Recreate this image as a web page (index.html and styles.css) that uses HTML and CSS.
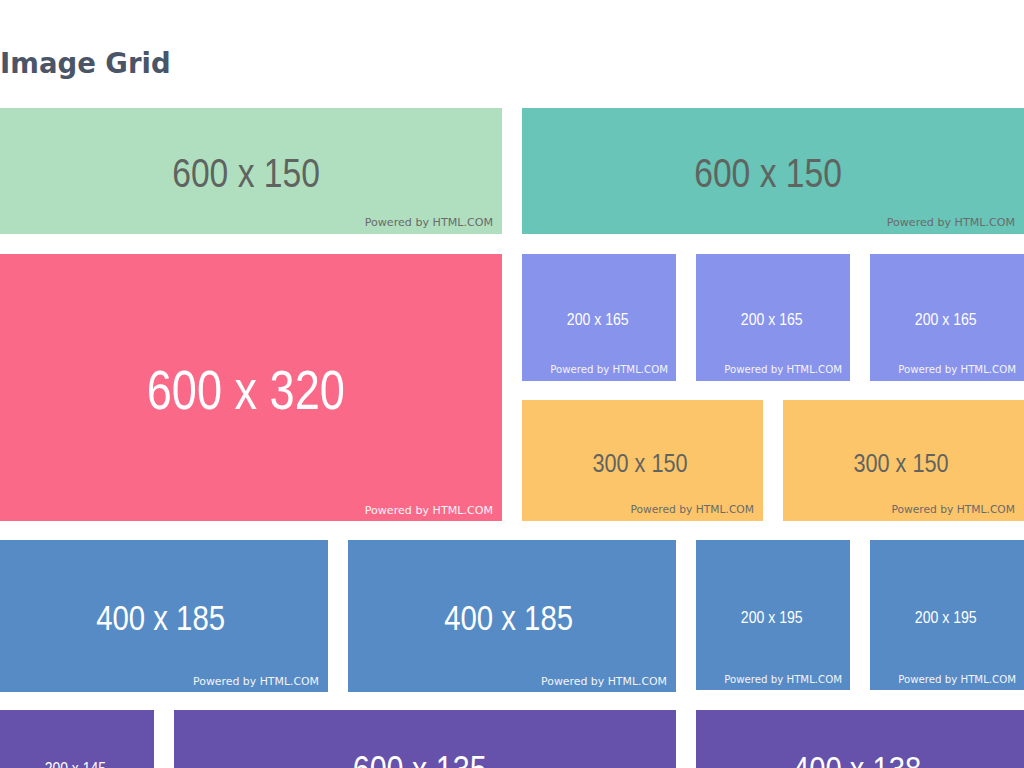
FILE: index.html
```html
<!DOCTYPE html>
<html lang="en">
<head>
<meta charset="utf-8">
<title>Image Grid</title>
<link rel="stylesheet" href="styles.css">
</head>
<body>
<main class="page">
  <h1 class="title">Image Grid</h1>
  <section class="grid">
    <div class="tile span6 green light r600x150"><span class="label">600 x 150</span><span class="powered">Powered by HTML.COM</span></div>
    <div class="tile span6 teal light r600x150"><span class="label">600 x 150</span><span class="powered">Powered by HTML.COM</span></div>
    <div class="tile span6 tall pink dark r600x320"><span class="label">600 x 320</span><span class="powered">Powered by HTML.COM</span></div>
    <div class="tile span2 peri dark r200x165"><span class="label">200 x 165</span><span class="powered">Powered by HTML.COM</span></div>
    <div class="tile span2 peri dark r200x165"><span class="label">200 x 165</span><span class="powered">Powered by HTML.COM</span></div>
    <div class="tile span2 peri dark r200x165"><span class="label">200 x 165</span><span class="powered">Powered by HTML.COM</span></div>
    <div class="tile span3 yellow light r300x150"><span class="label">300 x 150</span><span class="powered">Powered by HTML.COM</span></div>
    <div class="tile span3 yellow light r300x150"><span class="label">300 x 150</span><span class="powered">Powered by HTML.COM</span></div>
    <div class="tile span4 blue dark r400x185"><span class="label">400 x 185</span><span class="powered">Powered by HTML.COM</span></div>
    <div class="tile span4 blue dark r400x185"><span class="label">400 x 185</span><span class="powered">Powered by HTML.COM</span></div>
    <div class="tile span2 blue dark r200x195"><span class="label">200 x 195</span><span class="powered">Powered by HTML.COM</span></div>
    <div class="tile span2 blue dark r200x195"><span class="label">200 x 195</span><span class="powered">Powered by HTML.COM</span></div>
    <div class="tile span2 purple dark r200x145"><span class="label">200 x 145</span><span class="powered">Powered by HTML.COM</span></div>
    <div class="tile span6 purple dark r600x135"><span class="label">600 x 135</span><span class="powered">Powered by HTML.COM</span></div>
    <div class="tile span4 purple dark r400x138"><span class="label">400 x 138</span><span class="powered">Powered by HTML.COM</span></div>
  </section>
</main>
</body>
</html>
```

FILE: styles.css
```css
html, body {
  margin: 0;
  padding: 0;
  background: #ffffff;
}

.page {
  width: 1024px;
}

.title {
  margin: 47px 0 29px;
  font-family: "DejaVu Sans", sans-serif;
  font-weight: bold;
  font-size: 27.5px;
  color: #4a5568;
}

.grid {
  display: grid;
  grid-template-columns: repeat(12, 1fr);
  grid-template-rows: 125.5px 126.5px 120px 150px 113px;
  gap: 20px;
}

.tile {
  position: relative;
  align-self: start;
  display: flex;
  align-items: center;
  justify-content: center;
  padding-top: 6px;
  padding-right: 2%;
  box-sizing: border-box;
  overflow: hidden;
}

.span2 { grid-column: span 2; }
.span3 { grid-column: span 3; }
.span4 { grid-column: span 4; }
.span6 { grid-column: span 6; }
.tall { grid-row: span 2; }

.label {
  display: inline-block;
  font-family: "Liberation Sans", Arial, sans-serif;
  white-space: nowrap;
  line-height: 1;
  transform: scaleX(0.82);
}

.powered {
  position: absolute;
  right: 9px;
  bottom: 4px;
  font-family: "DejaVu Sans", Verdana, sans-serif;
  white-space: nowrap;
  line-height: 1.2;
}

.light .label { color: #5f6461; }
.light .powered { color: #6a6a6a; }
.dark .label { color: #ffffff; }
.dark .powered { color: #f4f4f8; }

.green { background: #b0dfc0; }
.teal { background: #68c5b8; }
.pink { background: #fb6989; }
.peri { background: #8893ec; }
.yellow { background: #fdc56a; }
.blue { background: #568bc6; }
.purple { background: #6651ab; }

.r600x150 { aspect-ratio: 600 / 150; }
.r600x150 .label { font-size: 41px; }
.r600x150 .powered { font-size: 11.1px; }

.r600x320 { aspect-ratio: 600 / 320; }
.r600x320 .label { font-size: 55px; }
.r600x320 .powered { font-size: 11.1px; }

.r200x165 { aspect-ratio: 200 / 165; }
.r200x165 .label { font-size: 17.2px; }
.r200x165 .powered { font-size: 10.2px; right: 8px; }

.r300x150 { aspect-ratio: 300 / 150; }
.r300x150 .label { font-size: 26.4px; }
.r300x150 .powered { font-size: 10.7px; }

.r400x185 { aspect-ratio: 400 / 185; }
.r400x185 .label { font-size: 35.8px; }
.r400x185 .powered { font-size: 10.9px; }

.r200x195 { aspect-ratio: 200 / 195; }
.r200x195 .label { font-size: 17.2px; }
.r200x195 .powered { font-size: 10.2px; right: 8px; }

.r200x145 { aspect-ratio: 200 / 145; }
.r200x145 .label { font-size: 17px; }
.r200x145 .powered { font-size: 10.2px; right: 8px; }

.r600x135 { aspect-ratio: 600 / 135; }
.r600x135 .label { font-size: 37.2px; }
.r600x135 .powered { font-size: 11.1px; }

.r400x138 { aspect-ratio: 400 / 138; }
.r400x138 .label { font-size: 35.6px; }
.r400x138 .powered { font-size: 10.9px; }
```
